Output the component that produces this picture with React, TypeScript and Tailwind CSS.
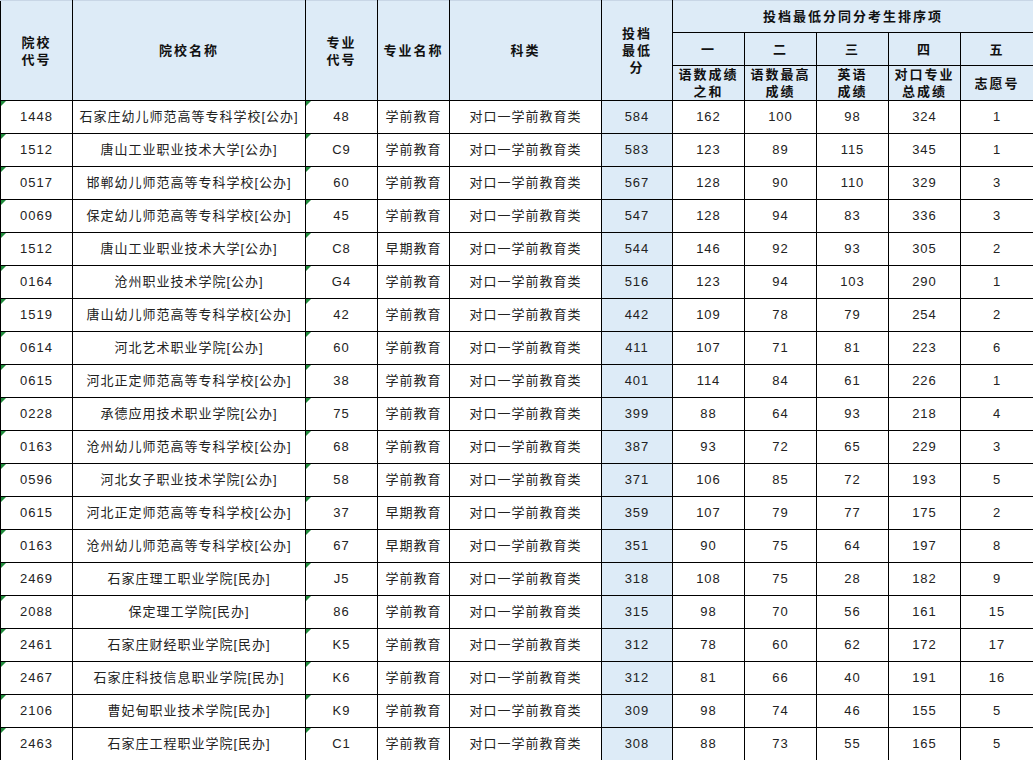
import React from "react";

const rows: string[][] = [
  ["1448", "石家庄幼儿师范高等专科学校[公办]", "48", "学前教育", "584", "162", "100", "98", "324", "1"],
  ["1512", "唐山工业职业技术大学[公办]", "C9", "学前教育", "583", "123", "89", "115", "345", "1"],
  ["0517", "邯郸幼儿师范高等专科学校[公办]", "60", "学前教育", "567", "128", "90", "110", "329", "3"],
  ["0069", "保定幼儿师范高等专科学校[公办]", "45", "学前教育", "547", "128", "94", "83", "336", "3"],
  ["1512", "唐山工业职业技术大学[公办]", "C8", "早期教育", "544", "146", "92", "93", "305", "2"],
  ["0164", "沧州职业技术学院[公办]", "G4", "学前教育", "516", "123", "94", "103", "290", "1"],
  ["1519", "唐山幼儿师范高等专科学校[公办]", "42", "学前教育", "442", "109", "78", "79", "254", "2"],
  ["0614", "河北艺术职业学院[公办]", "60", "学前教育", "411", "107", "71", "81", "223", "6"],
  ["0615", "河北正定师范高等专科学校[公办]", "38", "学前教育", "401", "114", "84", "61", "226", "1"],
  ["0228", "承德应用技术职业学院[公办]", "75", "学前教育", "399", "88", "64", "93", "218", "4"],
  ["0163", "沧州幼儿师范高等专科学校[公办]", "68", "学前教育", "387", "93", "72", "65", "229", "3"],
  ["0596", "河北女子职业技术学院[公办]", "58", "学前教育", "371", "106", "85", "72", "193", "5"],
  ["0615", "河北正定师范高等专科学校[公办]", "37", "早期教育", "359", "107", "79", "77", "175", "2"],
  ["0163", "沧州幼儿师范高等专科学校[公办]", "67", "早期教育", "351", "90", "75", "64", "197", "8"],
  ["2469", "石家庄理工职业学院[民办]", "J5", "学前教育", "318", "108", "75", "28", "182", "9"],
  ["2088", "保定理工学院[民办]", "86", "学前教育", "315", "98", "70", "56", "161", "15"],
  ["2461", "石家庄财经职业学院[民办]", "K5", "学前教育", "312", "78", "60", "62", "172", "17"],
  ["2467", "石家庄科技信息职业学院[民办]", "K6", "学前教育", "312", "81", "66", "40", "191", "16"],
  ["2106", "曹妃甸职业技术学院[民办]", "K9", "学前教育", "309", "98", "74", "46", "155", "5"],
  ["2463", "石家庄工程职业学院[民办]", "C1", "学前教育", "308", "88", "73", "55", "165", "5"],
];

const th =
  "border border-black bg-[#ddebf7] text-center align-middle font-bold text-[13px] leading-[17px] tracking-[2px] text-[#111] p-0";
const td =
  "border border-black text-center align-middle text-[13px] tracking-[1px] text-[#222] p-0 h-[33px]";

function Tri() {
  return (
    <span className="absolute left-0 top-0 w-0 h-0 border-t-[5px] border-r-[5px] border-t-[#1f8b3b] border-r-transparent" />
  );
}

export default function App() {
  return (
    <div
      className="w-[1033px] h-[760px] bg-white overflow-hidden"
      style={{ fontFamily: '"Liberation Sans", "Noto Sans CJK SC", sans-serif' }}
    >
      <table className="border-collapse table-fixed w-[1033px]">
        <colgroup>
          <col className="w-[72px]" />
          <col className="w-[233px]" />
          <col className="w-[72px]" />
          <col className="w-[72px]" />
          <col className="w-[152px]" />
          <col className="w-[71px]" />
          <col className="w-[72px]" />
          <col className="w-[72px]" />
          <col className="w-[72px]" />
          <col className="w-[72px]" />
          <col className="w-[73px]" />
        </colgroup>
        <thead>
          <tr className="h-[32px]">
            <th rowSpan={3} className={th + " border-t-[#c8d6e6]"}>
              院校
              <br />
              代号
            </th>
            <th rowSpan={3} className={th + " border-t-[#c8d6e6]"}>
              院校名称
            </th>
            <th rowSpan={3} className={th + " border-t-[#c8d6e6]"}>
              专业
              <br />
              代号
            </th>
            <th rowSpan={3} className={th + " border-t-[#c8d6e6]"}>
              专业名称
            </th>
            <th rowSpan={3} className={th + " border-t-[#c8d6e6]"}>
              科类
            </th>
            <th rowSpan={3} className={th + " border-t-[#c8d6e6]"}>
              投档
              <br />
              最低
              <br />分
            </th>
            <th colSpan={5} className={th + " border-t-[#c8d6e6] h-[32px]"}>
              投档最低分同分考生排序项
            </th>
          </tr>
          <tr className="h-[33px]">
            <th className={th}>一</th>
            <th className={th}>二</th>
            <th className={th}>三</th>
            <th className={th}>四</th>
            <th className={th}>五</th>
          </tr>
          <tr className="h-[33px]">
            <th className={th}>
              语数成绩
              <br />
              之和
            </th>
            <th className={th}>
              语数最高
              <br />
              成绩
            </th>
            <th className={th}>
              英语
              <br />
              成绩
            </th>
            <th className={th}>
              对口专业
              <br />
              总成绩
            </th>
            <th className={th}>志愿号</th>
          </tr>
        </thead>
        <tbody>
          {rows.map((r, i) => (
            <tr key={i} className="h-[33px]">
              <td className={td + " relative"}>
                <Tri />
                {r[0]}
              </td>
              <td className={td}>{r[1]}</td>
              <td className={td + " relative"}>
                <Tri />
                {r[2]}
              </td>
              <td className={td}>{r[3]}</td>
              <td className={td}>对口一学前教育类</td>
              <td className={td + " bg-[#ddebf7]"}>{r[4]}</td>
              <td className={td}>{r[5]}</td>
              <td className={td}>{r[6]}</td>
              <td className={td}>{r[7]}</td>
              <td className={td}>{r[8]}</td>
              <td className={td}>{r[9]}</td>
            </tr>
          ))}
        </tbody>
      </table>
    </div>
  );
}
